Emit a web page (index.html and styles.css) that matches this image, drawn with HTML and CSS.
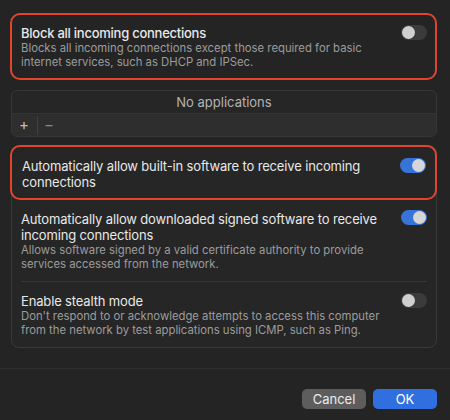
FILE: index.html
```html
<!DOCTYPE html>
<html lang="en">
<head>
<meta charset="utf-8">
<title>Firewall Options</title>
<link rel="stylesheet" href="styles.css">
</head>
<body>
<div class="sheet">
  <div class="content">
    <div class="card highlight">
      <div class="text">
        <div class="title">Block all incoming connections</div>
        <div class="desc">Blocks all incoming connections except those required for basic internet services, such as DHCP and IPSec.</div>
      </div>
      <span class="toggle"></span>
    </div>

    <div class="apps">
      <div class="apps-list">No applications</div>
      <div class="apps-bar">
        <span class="bar-btn plus">+</span>
        <span class="bar-sep"></span>
        <span class="bar-btn minus">−</span>
      </div>
    </div>

    <div class="group">
      <div class="row highlight">
        <div class="text">
          <div class="title">Automatically allow built-in software to receive incoming connections</div>
        </div>
        <span class="toggle on"></span>
      </div>
      <div class="row row-signed">
        <div class="text">
          <div class="title">Automatically allow downloaded signed software to receive incoming connections</div>
          <div class="desc">Allows software signed by a valid certificate authority to provide services accessed from the network.</div>
        </div>
        <span class="toggle on"></span>
      </div>
      <div class="divider"></div>
      <div class="row row-stealth">
        <div class="text">
          <div class="title">Enable stealth mode</div>
          <div class="desc">Don't respond to or acknowledge attempts to access this computer from the network by test applications using ICMP, such as Ping.</div>
        </div>
        <span class="toggle"></span>
      </div>
    </div>
  </div>

  <div class="footer">
    <button class="btn cancel">Cancel</button>
    <button class="btn ok">OK</button>
  </div>
</div>
</body>
</html>
```

FILE: styles.css
```css
html, body {
  margin: 0;
  padding: 0;
}

body {
  background: #242424;
  width: 450px;
  height: 420px;
  overflow: hidden;
  font-family: Inter, "Liberation Sans", sans-serif;
  -webkit-font-smoothing: antialiased;
}

.sheet {
  display: flex;
  flex-direction: column;
}

.content {
  padding: 13px 13px 0 10px;
  display: flex;
  flex-direction: column;
}

.text {
  flex: 1;
  min-width: 0;
  max-width: 372px;
}

.title {
  font-size: 13px;
  line-height: 16px;
  color: #e8e8e8;
  font-weight: 400;
  letter-spacing: -0.15px;
}

.card .title {
  font-weight: 500;
  letter-spacing: -0.25px;
}

.desc {
  font-size: 11.3px;
  line-height: 14px;
  color: #9c9c9c;
  letter-spacing: 0;
}

.highlight {
  border: 2px solid #e4432c;
  border-radius: 10px;
}

.card {
  display: flex;
  padding: 10px 8px 9px 9px;
  height: 44px;
}

.toggle {
  position: relative;
  flex: none;
  width: 26px;
  height: 15px;
  border-radius: 8px;
  background: #3b3b3b;
  margin-left: auto;
  margin-top: 0;
}

.toggle::after {
  content: "";
  position: absolute;
  top: 1px;
  left: 1px;
  width: 13px;
  height: 13px;
  border-radius: 50%;
  background: #cfcfcf;
}

.toggle.on {
  background: #3874d8;
}

.toggle.on::after {
  left: 12px;
  background: #d6d6d6;
}

.apps {
  margin: 10px 0 0 1px;
  border: 1px solid #363636;
  border-radius: 6px;
  overflow: hidden;
  background: #262626;
}

.apps-list {
  height: 22px;
  display: flex;
  align-items: center;
  justify-content: center;
  font-size: 13px;
  color: #b4b4b4;
}

.apps-bar {
  height: 23px;
  background: #2e2e2e;
  border-top: 1px solid #333333;
  display: flex;
  align-items: center;
  padding-left: 4px;
  box-sizing: border-box;
}

.bar-btn {
  width: 16px;
  text-align: center;
  font-size: 15px;
  line-height: 16px;
  color: #bdbdbd;
}

.bar-btn.minus {
  color: #8a8a8a;
  width: 18px;
  margin-left: 2px;
}

.bar-sep {
  width: 1px;
  height: 19px;
  background: #404040;
  margin-left: 5px;
}

.group {
  margin: 8px 0 0 1px;
  border: 1px solid #383838;
  border-radius: 8px;
  background: #262626;
  display: flex;
  flex-direction: column;
}

.row {
  display: flex;
}

.group .row.highlight {
  margin: -1px -1px 0 -2px;
  padding: 11px 9px 8px 10px;
}

.row-signed {
  padding: 11px 9px 10px 9px;
}

.row-signed .toggle {
  margin-top: -1px;
}

.divider {
  height: 1px;
  background: #363636;
  margin: 0 9px 0 9px;
}

.row-stealth {
  padding: 11px 9px 10px 9px;
}

.row-stealth .toggle {
  margin-top: 0;
}

.footer {
  margin-top: 20px;
  border-top: 1px solid #2f2f2f;
  padding: 20px 13px 0 0;
  display: flex;
  justify-content: flex-end;
  gap: 7px;
}

.btn {
  width: 64px;
  height: 20px;
  border: none;
  border-radius: 5px;
  font-family: Inter, "Liberation Sans", sans-serif;
  font-size: 13px;
  line-height: 20px;
  padding: 0;
  color: #ececec;
}

.btn.cancel {
  background: #5d5d5d;
}

.btn.ok {
  background: #2f6fdf;
  color: #ffffff;
}
```
